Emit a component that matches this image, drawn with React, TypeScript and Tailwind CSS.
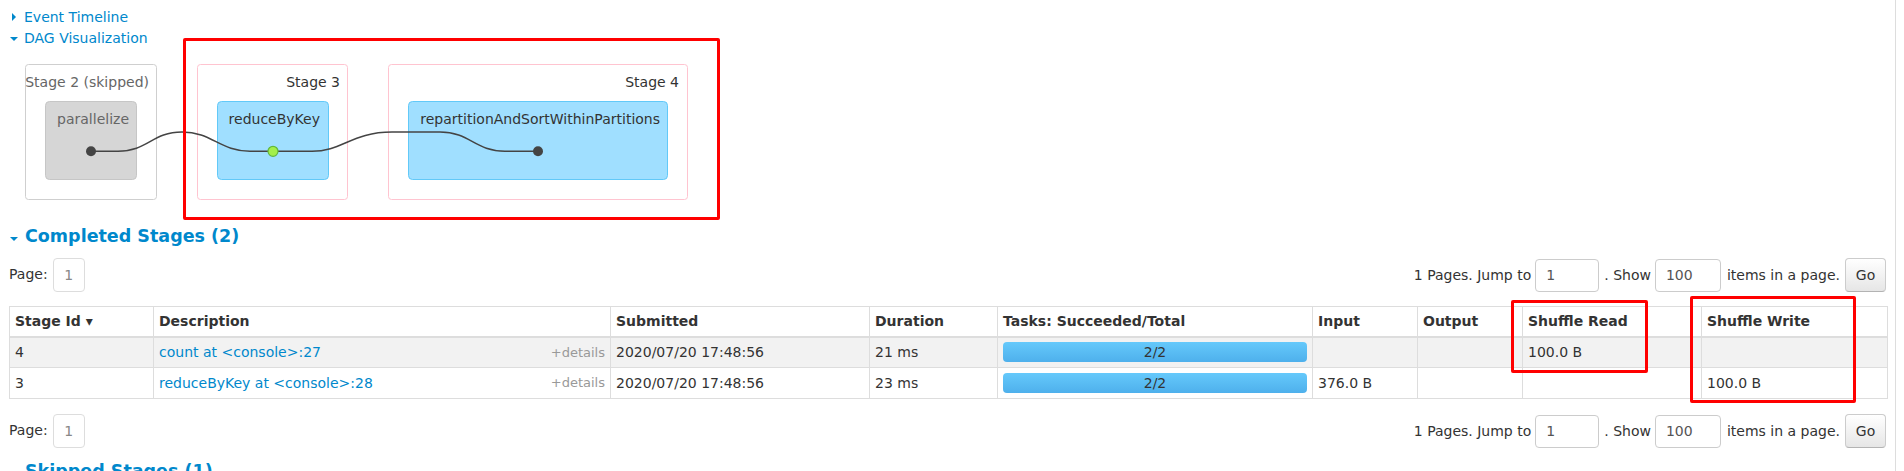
import React from 'react';

type StageRow = {
  id: string;
  desc: string;
  submitted: string;
  duration: string;
  tasks: string;
  input: string;
  output: string;
  shuffleRead: string;
  shuffleWrite: string;
};

const rows: StageRow[] = [
  {
    id: '4',
    desc: 'count at <console>:27',
    submitted: '2020/07/20 17:48:56',
    duration: '21 ms',
    tasks: '2/2',
    input: '',
    output: '',
    shuffleRead: '100.0 B',
    shuffleWrite: '',
  },
  {
    id: '3',
    desc: 'reduceByKey at <console>:28',
    submitted: '2020/07/20 17:48:56',
    duration: '23 ms',
    tasks: '2/2',
    input: '376.0 B',
    output: '',
    shuffleRead: '',
    shuffleWrite: '100.0 B',
  },
];

const ArrowDown = () => (
  <span className="inline-block w-0 h-0 border-x-[4px] border-x-transparent border-t-[4px] border-t-[#0088cc]" />
);

const ArrowRight = () => (
  <span className="inline-block w-0 h-0 border-y-[4px] border-y-transparent border-l-[4px] border-l-[#0088cc]" />
);

const Pagination = () => (
  <div className="flex items-center justify-between h-[34px]">
    <div className="flex items-center">
      <span className="-mt-[2px]">Page:</span>
      <div className="ml-[5px] w-[32px] h-[34px] border border-[#ddd] rounded-[4px] flex items-center justify-center text-[#888]">
        1
      </div>
    </div>
    <div className="flex items-center">
      <span>1 Pages. Jump to</span>
      <input
        readOnly
        value="1"
        className="ml-[4px] w-[64px] h-[33px] border border-[#ccc] rounded-[4px] px-[10px] text-[#555] outline-none"
      />
      <span className="ml-[5px]">. Show</span>
      <input
        readOnly
        value="100"
        className="ml-[4px] w-[66px] h-[33px] border border-[#ccc] rounded-[4px] px-[10px] text-[#555] outline-none"
      />
      <span className="ml-[6px]">items in a page.</span>
      <button className="ml-[5px] w-[41px] h-[34px] border border-[#ccc] border-b-[#b3b3b3] rounded-[4px] bg-linear-to-b from-white to-[#e6e6e6] text-[#333]">
        Go
      </button>
    </div>
  </div>
);

// DAG drawing, coords are page coords shifted by (0, 48)
const DagViz = () => (
  <svg width="720" height="176" className="block -ml-[9px]" fontFamily="DejaVu Sans, sans-serif" fontSize="14">
    {/* clusters */}
    <rect x="25.5" y="16.5" width="131" height="135" rx="3" fill="#fff" stroke="#cfcfcf" />
    <text x="149" y="39" textAnchor="end" fill="#666">Stage 2 (skipped)</text>
    <rect x="197.5" y="16.5" width="150" height="135" rx="3" fill="#fff" stroke="#ffc4d0" />
    <text x="340" y="39" textAnchor="end" fill="#333">Stage 3</text>
    <rect x="388.5" y="16.5" width="299" height="135" rx="3" fill="#fff" stroke="#ffc4d0" />
    <text x="679" y="39" textAnchor="end" fill="#333">Stage 4</text>

    {/* nodes */}
    <rect x="45.5" y="53.5" width="91" height="78" rx="4" fill="#d6d6d6" stroke="#c6c6c6" />
    <text x="129" y="76" textAnchor="end" fill="#666">parallelize</text>
    <rect x="217.5" y="53.5" width="111" height="78" rx="4" fill="#a0dfff" stroke="#62c9f8" />
    <text x="320" y="76" textAnchor="end" fill="#333">reduceByKey</text>
    <rect x="408.5" y="53.5" width="259" height="78" rx="4" fill="#a0dfff" stroke="#62c9f8" />
    <text x="660" y="76" textAnchor="end" fill="#333">repartitionAndSortWithinPartitions</text>

    {/* edges */}
    <path
      d="M91,103.3 L118,103.3 C148,103.3 152,84 182,84 C212,84 220,103.3 250,103.3 L273,103.3"
      fill="none"
      stroke="#444"
      strokeWidth="1.5"
    />
    <path
      d="M273,103.3 L312,103.3 C342,103.3 352,84 392,84 L440,84 C470,84 475,103.3 505,103.3 L538,103.3"
      fill="none"
      stroke="#444"
      strokeWidth="1.5"
    />

    {/* dots */}
    <circle cx="91" cy="103.3" r="5" fill="#444" />
    <circle cx="273" cy="103.3" r="5" fill="#a3ef4c" stroke="#62b83c" strokeWidth="1.2" />
    <circle cx="538" cy="103.3" r="5" fill="#444" />
  </svg>
);

const th = 'h-[30px] px-[5px] text-left font-bold border border-[#ddd] border-b-2 align-middle';
const td = 'h-[31px] px-[5px] border border-[#ddd] align-middle';

export default function App() {
  return (
    <div className="relative w-[1904px] h-[471px] overflow-hidden bg-white font-['DejaVu_Sans',sans-serif] text-[14px] text-[#333]">
      <div className="w-[1896px] h-full border-r border-[#ddd] px-[9px] pt-[6px]">
        {/* collapsible links */}
        <div className="flex items-center h-[21px] leading-[20px] text-[#0088cc]">
          <span className="w-[15px] pl-[3px] flex items-center">
            <ArrowRight />
          </span>
          <span>Event Timeline</span>
        </div>
        <div className="flex items-center h-[21px] leading-[20px] text-[#0088cc]">
          <span className="w-[15px] pl-[1px] flex items-center mt-[3px]">
            <ArrowDown />
          </span>
          <span>DAG Visualization</span>
        </div>

        <DagViz />

        {/* Completed stages */}
        <div className="flex items-center h-[25px] text-[17.5px] font-bold text-[#0088cc]">
          <span className="w-[16px] pl-[1px] flex items-center mt-[5px]">
            <ArrowDown />
          </span>
          <span>Completed Stages (2)</span>
        </div>

        <div className="mt-[9px]">
          <Pagination />
        </div>

        <table className="mt-[14px] w-[1878px] table-fixed border-collapse border border-[#ddd]">
          <colgroup>
            <col className="w-[144px]" />
            <col className="w-[457px]" />
            <col className="w-[259px]" />
            <col className="w-[128px]" />
            <col className="w-[315px]" />
            <col className="w-[105px]" />
            <col className="w-[105px]" />
            <col className="w-[179px]" />
            <col className="w-[186px]" />
          </colgroup>
          <thead>
            <tr>
              <th className={th}>Stage Id ▾</th>
              <th className={th}>Description</th>
              <th className={th}>Submitted</th>
              <th className={th}>Duration</th>
              <th className={th}>Tasks: Succeeded/Total</th>
              <th className={th}>Input</th>
              <th className={th}>Output</th>
              <th className={th}>Shuffle Read</th>
              <th className={th}>Shuffle Write</th>
            </tr>
          </thead>
          <tbody>
            {rows.map((r, i) => (
              <tr key={r.id} className={i === 0 ? 'bg-[#f2f2f2]' : 'bg-white'}>
                <td className={td}>{r.id}</td>
                <td className={td}>
                  <div className="flex items-center justify-between">
                    <span className="text-[#0088cc]">{r.desc}</span>
                    <span className="text-[13px] text-[#999]">+details</span>
                  </div>
                </td>
                <td className={td}>{r.submitted}</td>
                <td className={td}>{r.duration}</td>
                <td className={td}>
                  <div className="h-[20px] rounded-[4px] bg-linear-to-b from-[#65c9fb] to-[#4eb0ec] flex items-center justify-center text-[#333]">
                    {r.tasks}
                  </div>
                </td>
                <td className={td}>{r.input}</td>
                <td className={td}>{r.output}</td>
                <td className={td}>{r.shuffleRead}</td>
                <td className={td}>{r.shuffleWrite}</td>
              </tr>
            ))}
          </tbody>
        </table>

        <div className="mt-[15px]">
          <Pagination />
        </div>

        {/* Skipped stages, cut off by the window edge */}
        <div className="mt-[11px] flex items-center h-[25px] text-[17.5px] font-bold text-[#0088cc]">
          <span className="w-[16px] pl-[1px] flex items-center mt-[5px]">
            <ArrowDown />
          </span>
          <span>Skipped Stages (1)</span>
        </div>
      </div>

      {/* red annotation boxes */}
      <div className="absolute left-[183px] top-[38px] w-[537px] h-[182px] border-[3px] border-[#ff0000] rounded-[2px] pointer-events-none" />
      <div className="absolute left-[1511px] top-[300px] w-[137px] h-[73px] border-[3px] border-[#ff0000] rounded-[2px] pointer-events-none" />
      <div className="absolute left-[1690px] top-[296px] w-[166px] h-[107px] border-[3px] border-[#ff0000] rounded-[2px] pointer-events-none" />
    </div>
  );
}
